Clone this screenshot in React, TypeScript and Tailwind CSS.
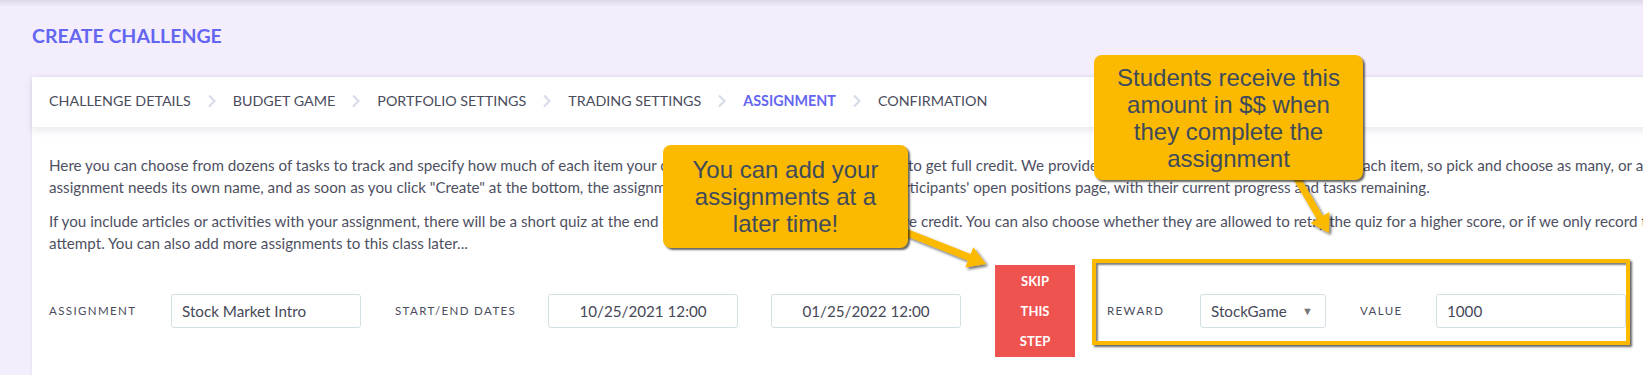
import React from "react";

const steps = [
  "Challenge Details",
  "Budget Game",
  "Portfolio Settings",
  "Trading Settings",
  "Assignment",
  "Confirmation",
];

function Chevron() {
  return (
    <svg width="10" height="14" viewBox="0 0 10 14" className="mx-[16px]">
      <polyline
        points="2,1.5 7.5,7 2,12.5"
        fill="none"
        stroke="#d6dde8"
        strokeWidth="2.2"
      />
    </svg>
  );
}

// builds an arrow polygon from start to tip
function arrowPoints(x1: number, y1: number, x2: number, y2: number, shaft = 7, headW = 22, headL = 18) {
  const dx = x2 - x1;
  const dy = y2 - y1;
  const len = Math.hypot(dx, dy);
  const ux = dx / len;
  const uy = dy / len;
  const px = -uy;
  const py = ux;
  const bx = x2 - ux * headL;
  const by = y2 - uy * headL;
  const pts = [
    [x1 + (px * shaft) / 2, y1 + (py * shaft) / 2],
    [bx + (px * shaft) / 2, by + (py * shaft) / 2],
    [bx + (px * headW) / 2, by + (py * headW) / 2],
    [x2, y2],
    [bx - (px * headW) / 2, by - (py * headW) / 2],
    [bx - (px * shaft) / 2, by - (py * shaft) / 2],
    [x1 - (px * shaft) / 2, y1 - (py * shaft) / 2],
  ];
  return pts.map((p) => p.join(",")).join(" ");
}

function Label({ w, children }: { w: string; children: React.ReactNode }) {
  return (
    <span className={w + " shrink-0 text-[11.5px] uppercase tracking-[0.12em] text-[#4a4c5c] whitespace-nowrap"}>
      {children}
    </span>
  );
}

const field =
  "h-[34px] shrink-0 rounded-[3px] border border-[#d3dfe2] bg-white px-[10px] flex items-center text-[15.2px] text-[#464857] whitespace-nowrap";

export default function App() {
  return (
    <div className="relative h-[375px] w-[1643px] overflow-hidden bg-[#f4eefc] font-['Lato',sans-serif]">
      <div className="absolute inset-x-0 top-0 h-[7px] bg-gradient-to-b from-[#dcd6e6] to-transparent" />

      <div className="pl-[32px] pt-[24px]">
        <h1 className="text-[19.5px] font-bold leading-[24px] text-[#6466f1]">
          CREATE CHALLENGE
        </h1>

        <div className="mt-[29px] w-[2100px] bg-white shadow-[0_0_4px_rgba(0,0,0,0.08)]">
          <nav className="relative z-10 flex h-[50px] items-center bg-white px-[17px] pb-[3px] shadow-[0_3px_8px_rgba(60,50,90,0.12)]">
            {steps.map((s, i) => (
              <div key={s} className="flex items-center">
                <span
                  className={
                    "text-[14.3px] uppercase whitespace-nowrap " +
                    (s === "Assignment" ? "font-bold text-[#6466f1]" : "text-[#4a4c5c]")
                  }
                >
                  {s}
                </span>
                {i < steps.length - 1 && <Chevron />}
              </div>
            ))}
          </nav>

          <div className="px-[17px] pt-[27px] pb-[40px] text-[15.2px] leading-[22px] text-[#4e5062]">
            <p className="whitespace-nowrap">
              Here you can choose from dozens of tasks to track and specify how much of each item your class members will need to complete to get full credit. We provide suggested default values right next to each item, so pick and choose as many, or as few as you'd like. Each
              <br />
              assignment needs its own name, and as soon as you click "Create" at the bottom, the assignment will be added onto all of your participants' open positions page, with their current progress and tasks remaining.
            </p>
            <p className="mt-[12px] whitespace-nowrap">
              If you include articles or activities with your assignment, there will be a short quiz at the end of each item they must pass to receive credit. You can also choose whether they are allowed to retry the quiz for a higher score, or if we only record their first
              <br />
              attempt. You can also add more assignments to this class later...
            </p>

            <div className="mt-[11px] flex items-center">
              <Label w="w-[122px]">Assignment</Label>
              <div className={field + " w-[190px]"}>Stock Market Intro</div>
              <Label w="ml-[34px] w-[153px]">Start/End Dates</Label>
              <div className={field + " w-[190px] justify-center"}>10/25/2021 12:00</div>
              <div className={field + " ml-[33px] w-[190px] justify-center"}>01/25/2022 12:00</div>
              <button className="ml-[34px] w-[80px] shrink-0 bg-[#ef5350] py-[1px] text-[13px] font-bold leading-[30px] text-white">
                SKIP
                <br />
                THIS
                <br />
                STEP
              </button>
              <Label w="ml-[32px] w-[93px]">Reward</Label>
              <div className={field + " w-[126px] justify-between pr-[12px]"}>
                <span>StockGame</span>
                <span className="text-[11px] text-[#777]">▼</span>
              </div>
              <Label w="ml-[34px] w-[76px]">Value</Label>
              <div className={field + " w-[190px]"}>1000</div>
            </div>
          </div>
        </div>
      </div>

      <svg className="pointer-events-none absolute left-0 top-0 z-20" width="1643" height="375">
        <defs>
          <filter id="sh" x="-20%" y="-20%" width="140%" height="140%">
            <feDropShadow dx="2" dy="2" stdDeviation="1.4" floodColor="#000" floodOpacity="0.6" />
          </filter>
        </defs>
        <polygon points={arrowPoints(890, 226, 986, 264)} fill="#fbb900" filter="url(#sh)" />
        <polygon points={arrowPoints(1292, 170, 1329, 233)} fill="#fbb900" filter="url(#sh)" />
      </svg>

      <div className="absolute left-[1092px] top-[259px] z-20 h-[86px] w-[538px] border-4 border-[#fbb900] shadow-[2px_2px_2px_rgba(0,0,0,0.6),inset_2px_2px_2px_rgba(0,0,0,0.5)]" />

      <div className="absolute left-[663px] top-[145px] z-30 flex h-[103px] w-[245px] items-center justify-center rounded-[8px] bg-[#fbb900] text-center font-['Liberation_Sans',Arial,sans-serif] text-[24px] leading-[27px] text-[#3f4b5b] shadow-[2px_2px_2px_rgba(0,0,0,0.6)]">
        <div>
          You can add your
          <br />
          assignments at a
          <br />
          later time!
        </div>
      </div>

      <div className="absolute left-[1094px] top-[55px] z-30 flex h-[125px] w-[269px] items-center justify-center rounded-[8px] bg-[#fbb900] text-center font-['Liberation_Sans',Arial,sans-serif] text-[24px] leading-[27px] text-[#3f4b5b] shadow-[2px_2px_2px_rgba(0,0,0,0.6)]">
        <div>
          Students receive this
          <br />
          amount in $$ when
          <br />
          they complete the
          <br />
          assignment
        </div>
      </div>
    </div>
  );
}
